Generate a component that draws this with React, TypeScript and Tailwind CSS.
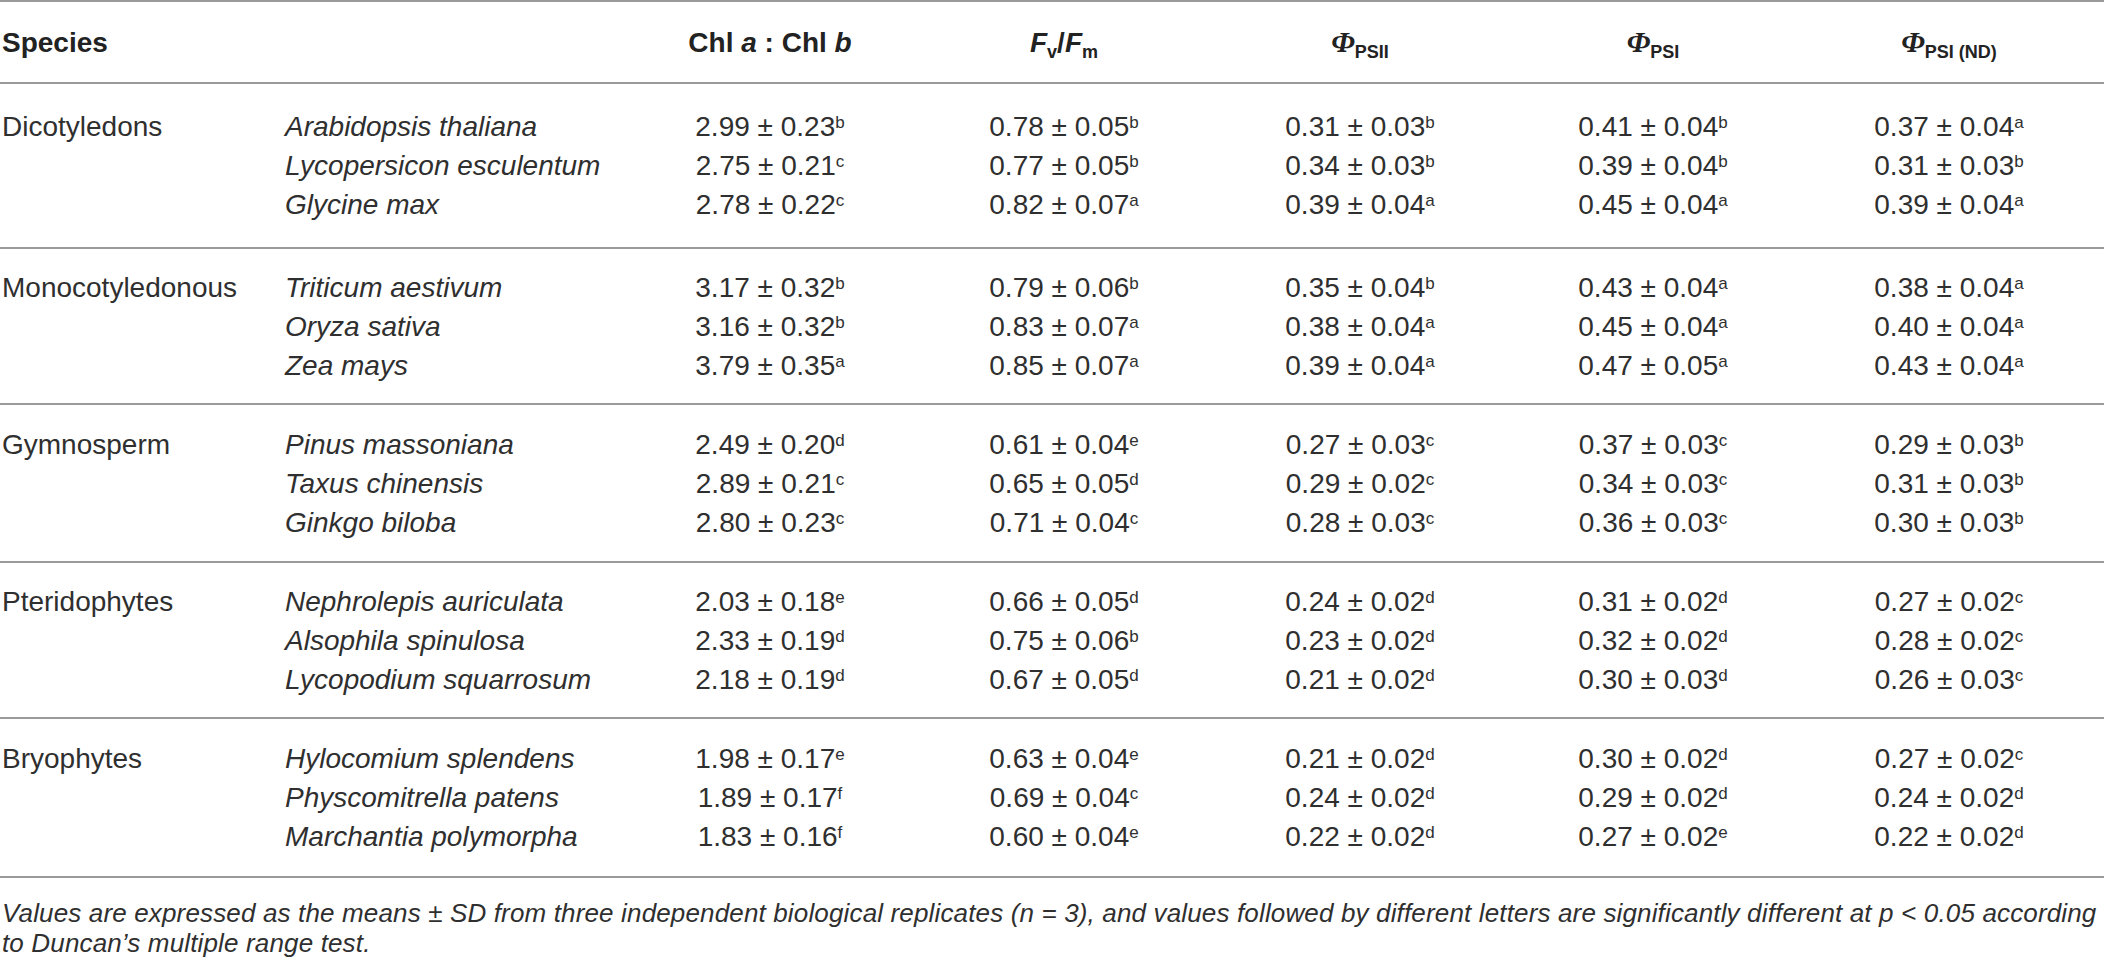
import React from "react";

type Cell = [string, string];
type Row = { name: string; values: Cell[] };
type Group = { label: string; height: string; rows: Row[] };

const groups: Group[] = [
  {
    label: "Dicotyledons",
    height: "h-[165px]",
    rows: [
      { name: "Arabidopsis thaliana", values: [["2.99 ± 0.23", "b"], ["0.78 ± 0.05", "b"], ["0.31 ± 0.03", "b"], ["0.41 ± 0.04", "b"], ["0.37 ± 0.04", "a"]] },
      { name: "Lycopersicon esculentum", values: [["2.75 ± 0.21", "c"], ["0.77 ± 0.05", "b"], ["0.34 ± 0.03", "b"], ["0.39 ± 0.04", "b"], ["0.31 ± 0.03", "b"]] },
      { name: "Glycine max", values: [["2.78 ± 0.22", "c"], ["0.82 ± 0.07", "a"], ["0.39 ± 0.04", "a"], ["0.45 ± 0.04", "a"], ["0.39 ± 0.04", "a"]] },
    ],
  },
  {
    label: "Monocotyledonous",
    height: "h-[156px]",
    rows: [
      { name: "Triticum aestivum", values: [["3.17 ± 0.32", "b"], ["0.79 ± 0.06", "b"], ["0.35 ± 0.04", "b"], ["0.43 ± 0.04", "a"], ["0.38 ± 0.04", "a"]] },
      { name: "Oryza sativa", values: [["3.16 ± 0.32", "b"], ["0.83 ± 0.07", "a"], ["0.38 ± 0.04", "a"], ["0.45 ± 0.04", "a"], ["0.40 ± 0.04", "a"]] },
      { name: "Zea mays", values: [["3.79 ± 0.35", "a"], ["0.85 ± 0.07", "a"], ["0.39 ± 0.04", "a"], ["0.47 ± 0.05", "a"], ["0.43 ± 0.04", "a"]] },
    ],
  },
  {
    label: "Gymnosperm",
    height: "h-[158px]",
    rows: [
      { name: "Pinus massoniana", values: [["2.49 ± 0.20", "d"], ["0.61 ± 0.04", "e"], ["0.27 ± 0.03", "c"], ["0.37 ± 0.03", "c"], ["0.29 ± 0.03", "b"]] },
      { name: "Taxus chinensis", values: [["2.89 ± 0.21", "c"], ["0.65 ± 0.05", "d"], ["0.29 ± 0.02", "c"], ["0.34 ± 0.03", "c"], ["0.31 ± 0.03", "b"]] },
      { name: "Ginkgo biloba", values: [["2.80 ± 0.23", "c"], ["0.71 ± 0.04", "c"], ["0.28 ± 0.03", "c"], ["0.36 ± 0.03", "c"], ["0.30 ± 0.03", "b"]] },
    ],
  },
  {
    label: "Pteridophytes",
    height: "h-[156px]",
    rows: [
      { name: "Nephrolepis auriculata", values: [["2.03 ± 0.18", "e"], ["0.66 ± 0.05", "d"], ["0.24 ± 0.02", "d"], ["0.31 ± 0.02", "d"], ["0.27 ± 0.02", "c"]] },
      { name: "Alsophila spinulosa", values: [["2.33 ± 0.19", "d"], ["0.75 ± 0.06", "b"], ["0.23 ± 0.02", "d"], ["0.32 ± 0.02", "d"], ["0.28 ± 0.02", "c"]] },
      { name: "Lycopodium squarrosum", values: [["2.18 ± 0.19", "d"], ["0.67 ± 0.05", "d"], ["0.21 ± 0.02", "d"], ["0.30 ± 0.03", "d"], ["0.26 ± 0.03", "c"]] },
    ],
  },
  {
    label: "Bryophytes",
    height: "h-[159px]",
    rows: [
      { name: "Hylocomium splendens", values: [["1.98 ± 0.17", "e"], ["0.63 ± 0.04", "e"], ["0.21 ± 0.02", "d"], ["0.30 ± 0.02", "d"], ["0.27 ± 0.02", "c"]] },
      { name: "Physcomitrella patens", values: [["1.89 ± 0.17", "f"], ["0.69 ± 0.04", "c"], ["0.24 ± 0.02", "d"], ["0.29 ± 0.02", "d"], ["0.24 ± 0.02", "d"]] },
      { name: "Marchantia polymorpha", values: [["1.83 ± 0.16", "f"], ["0.60 ± 0.04", "e"], ["0.22 ± 0.02", "d"], ["0.27 ± 0.02", "e"], ["0.22 ± 0.02", "d"]] },
    ],
  },
];

const cols = "grid grid-cols-[285px_335px_300px_288px_304px_282px_310px]";

function Sup({ children }: { children: React.ReactNode }) {
  return <span className="relative top-[-8px] text-[17px] leading-none">{children}</span>;
}

function Sub({ children }: { children: React.ReactNode }) {
  return <span className="relative top-[6px] text-[18px] leading-none font-bold">{children}</span>;
}

function Phi({ sub }: { sub: React.ReactNode }) {
  return (
    <span>
      <span className="font-['Liberation_Serif',serif] italic font-bold text-[30px]">Φ</span>
      <Sub>{sub}</Sub>
    </span>
  );
}

export default function App() {
  return (
    <div className="w-[2104px] bg-white text-[#2f2f2f] font-['Liberation_Sans',Arial,sans-serif] text-[28px] leading-[39px]">
      <div className={`${cols} h-[84px] items-center border-t-2 border-b-2 border-[#9a9a9a] font-bold text-[#222]`}>
        <div className="pl-[2px]">Species</div>
        <div />
        <div className="text-center">
          Chl <i>a</i> : Chl <i>b</i>
        </div>
        <div className="text-center">
          <i>F</i>
          <Sub>v</Sub>/<i>F</i>
          <Sub>m</Sub>
        </div>
        <div className="text-center">
          <Phi sub="PSII" />
        </div>
        <div className="text-center">
          <Phi sub="PSI" />
        </div>
        <div className="text-center">
          <Phi sub="PSI (ND)" />
        </div>
      </div>

      {groups.map((g) => (
        <div key={g.label} className={`${g.height} flex flex-col justify-center border-b-2 border-[#9a9a9a]`}>
          {g.rows.map((r, i) => (
            <div key={r.name} className={`${cols} h-[39px] items-center`}>
              <div className="pl-[2px]">{i === 0 ? g.label : ""}</div>
              <div className="italic">{r.name}</div>
              {r.values.map(([v, s], j) => (
                <div key={j} className="text-center whitespace-nowrap">
                  {v}
                  <Sup>{s}</Sup>
                </div>
              ))}
            </div>
          ))}
        </div>
      ))}

      <div className="pt-[20px] pl-[2px] italic text-[26px] tracking-[0.15px] leading-[30px] whitespace-nowrap">
        Values are expressed as the means ± SD from three independent biological replicates (n = 3), and values followed by different letters are significantly different at p &lt; 0.05 according
        <br />
        to Duncan’s multiple range test.
      </div>
    </div>
  );
}
